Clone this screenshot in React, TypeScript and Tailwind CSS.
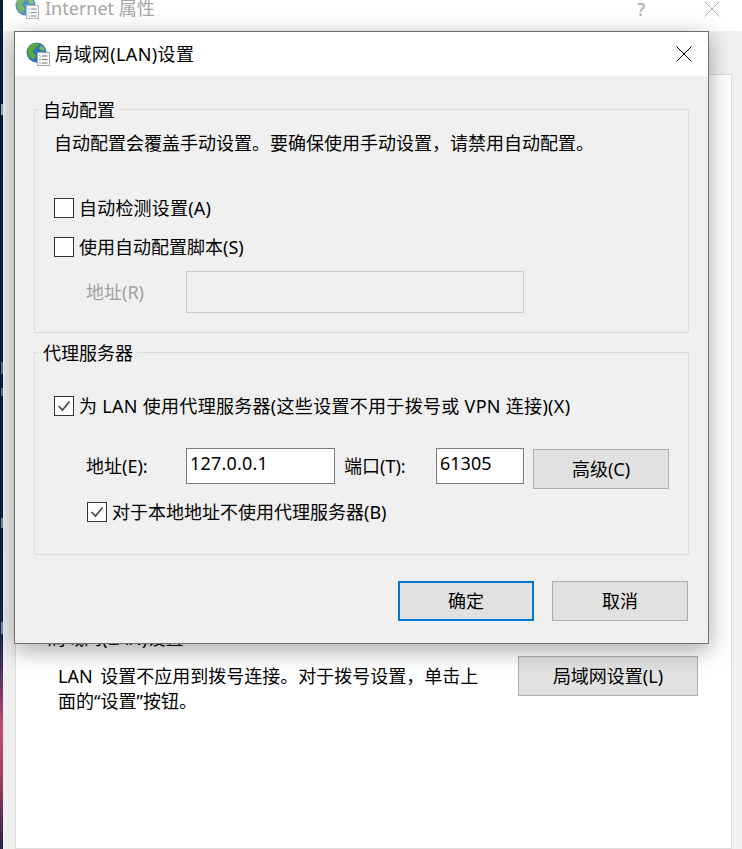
const font = { fontFamily: '"Noto Sans", "Noto Sans CJK SC", sans-serif' };

function GlobeIcon({ faded }: { faded?: boolean }) {
  return (
    <svg width="24" height="24" viewBox="0 0 24 24" className={faded ? 'opacity-80' : ''}>
      <circle cx="10.500" cy="10.500" r="10" fill="#2a78b4" />
      <path d="M3.500 4c3-2.500 6-3.500 9-2.500 1 2-1 3-3 4 0 2-2 2-3 4 1 2 3 2 3 5-1 2-2 3-3 3-3-2-5-6-5-9 0-2 1-3 2-4.500z" fill="#5aa83a" />
      <path d="M14 3.500c2 0 4.500 2 5 4.500l-3 1-2.500-2z" fill="#7ab648" />
      <rect x="11.500" y="10.500" width="12" height="13" fill="#f6f6f6" stroke="#a8a8a8" />
      <path d="M13.500 13.500l1 1M13.500 17l1 1M13.500 20.500l1 1" stroke="#2a78b4" fill="none" />
      <path d="M16 14h5.500M16 17.500h5.500M16 21h5.500" stroke="#777" fill="none" />
    </svg>
  );
}

function CloseIcon({ color }: { color: string }) {
  return (
    <svg width="16" height="16" viewBox="0 0 16 16">
      <path d="M0.500 0.500L15.500 15.500M15.500 0.500L0.500 15.500" stroke={color} fill="none" />
    </svg>
  );
}

function CheckBox({ checked }: { checked?: boolean }) {
  return (
    <span className="w-5 h-5 border border-[#333] bg-white flex items-center justify-center shrink-0">
      {checked && (
        <svg width="14" height="12" viewBox="0 0 14 12">
          <path d="M1.500 6l4 4 7-8.500" stroke="#444" strokeWidth="1.600" fill="none" />
        </svg>
      )}
    </span>
  );
}

function GroupBox({ title, className, children }: { title: string; className: string; children: React.ReactNode }) {
  return (
    <div className={`relative border border-[#dcdcdc] ${className}`}>
      <span className="absolute left-[4px] top-[-12px] px-1 bg-[#f0f0f0] text-[18px] leading-[24px] text-black">{title}</span>
      {children}
    </div>
  );
}

function Btn({ label, className }: { label: string; className: string }) {
  return (
    <div className={`flex items-center justify-center bg-[#e1e1e1] text-[18px] leading-[24px] text-black shrink-0 ${className}`}>{label}</div>
  );
}

export default function App() {
  return (
    <div className="relative w-[742px] h-[849px] overflow-hidden flex bg-white text-[18px] leading-[24px] text-black" style={font}>
      {/* wallpaper strip, with the clipped bits of desktop icon labels */}
      <div className="relative w-[3px] h-full shrink-0 overflow-hidden bg-[linear-gradient(to_bottom,#0a1c38_0%,#0c2044_70%,#2a2a60_77%,#c84a6e_86%,#a84060_91%,#2a2048_100%)]">
        <span className="absolute left-[1px] top-[104px] w-[2px] h-[11px] bg-[#cfe4f2]/70" />
        <span className="absolute left-[1px] top-[362px] w-[2px] h-[12px] bg-[#cfe4f2]/40" />
        <span className="absolute left-[1px] top-[388px] w-[2px] h-[8px] bg-[#e8d8d0]/40" />
        <span className="absolute left-[1px] top-[518px] w-[2px] h-[10px] bg-[#dcebf5]/50" />
        <span className="absolute left-[1px] top-[622px] w-[2px] h-[12px] bg-[#dcebf5]/50" />
      </div>

      {/* Internet properties window behind */}
      <div className="flex-1 flex flex-col min-w-0">
        <div className="h-[31px] bg-white flex items-start pl-3 pr-[22px] shrink-0">
          <div className="mt-[-5px]">
            <GlobeIcon faded />
          </div>
          <span className="ml-[6px] leading-[16px] text-[#a6a6a6]">Internet 属性</span>
          <span className="ml-auto mr-[59px] leading-[18px] text-[#a6a6a6]">?</span>
          <div className="mt-[1px]">
            <CloseIcon color="#b0b0b0" />
          </div>
        </div>
        <div className="flex-1 bg-[#f0f0f0] pl-3 pr-[10px] pt-[43px]">
          <div className="h-full bg-white border border-[#dcdcdc] pt-[551px] pl-[42px] pr-[33px]">
            <div className="ml-[-10px]">局域网(LAN)设置</div>
            <div className="flex justify-between mt-[6px]">
              <p className="w-[430px] mt-[8px] leading-[25px] [word-spacing:3px]">
                LAN 设置不应用到拨号连接。对于拨号设置，单击上面的“设置”按钮。
              </p>
              <Btn label="局域网设置(L)" className="w-[180px] h-10 border border-[#adadad]" />
            </div>
          </div>
        </div>
      </div>

      {/* LAN settings dialog */}
      <div className="absolute left-[14px] top-[31px] w-[695px] h-[613px] border border-[#6f6f6f] bg-[#f0f0f0] shadow-[0_6px_22px_rgba(0,0,0,0.35)] flex flex-col">
        <div className="h-[44px] bg-white flex items-center pl-[11px] pr-[16px] shrink-0">
          <GlobeIcon />
          <span className="ml-[5px] tracking-[0.4px]">局域网(LAN)设置</span>
          <div className="ml-auto">
            <CloseIcon color="#000" />
          </div>
        </div>

        <div className="px-[19px] pt-[33px]">
          <GroupBox title="自动配置" className="h-[224px] pl-[19px] pt-[21px]">
            <p>自动配置会覆盖手动设置。要确保使用手动设置，请禁用自动配置。</p>
            <div className="mt-[41px] flex items-center gap-[5px]">
              <CheckBox />
              <span className="tracking-[0.2px]">自动检测设置(A)</span>
            </div>
            <div className="mt-[15px] flex items-center gap-[5px]">
              <CheckBox />
              <span>使用自动配置脚本(S)</span>
            </div>
            <div className="mt-[12px] flex items-center text-[#a0a0a0]">
              <span className="w-[132px] pl-[32px]">地址(R)</span>
              <div className="w-[338px] h-[42px] border border-[#cccccc] bg-[#f0f0f0]" />
            </div>
          </GroupBox>

          <GroupBox title="代理服务器" className="mt-[19px] h-[203px] pl-[19px] pt-[41px]">
            <div className="flex items-center gap-[5px]">
              <CheckBox checked />
              <span className="tracking-[0.3px]">为 LAN 使用代理服务器(这些设置不用于拨号或 VPN 连接)(X)</span>
            </div>
            <div className="mt-[30px] flex items-start">
              <span className="w-[132px] pl-[32px] leading-[36px]">地址(E):</span>
              <div className="w-[149px] h-[36px] border border-[#7a7a7a] bg-white pl-[3px] leading-[28px] tracking-[0.2px]">127.0.0.1</div>
              <span className="w-[101px] pl-[9px] leading-[36px]">端口(T):</span>
              <div className="w-[88px] h-[36px] border border-[#7a7a7a] bg-white pl-[3px] leading-[28px]">61305</div>
              <Btn label="高级(C)" className="ml-[9px] mt-[1px] w-[136px] h-10 border border-[#adadad]" />
            </div>
            <div className="mt-[11px] ml-[33px] flex items-center gap-[5px]">
              <CheckBox checked />
              <span>对于本地地址不使用代理服务器(B)</span>
            </div>
          </GroupBox>

          <div className="mt-[26px] pr-[1px] flex justify-end gap-[18px]">
            <Btn label="确定" className="w-[136px] h-10 border-2 border-[#0078d7]" />
            <Btn label="取消" className="w-[136px] h-10 border border-[#adadad]" />
          </div>
        </div>
      </div>
    </div>
  );
}
